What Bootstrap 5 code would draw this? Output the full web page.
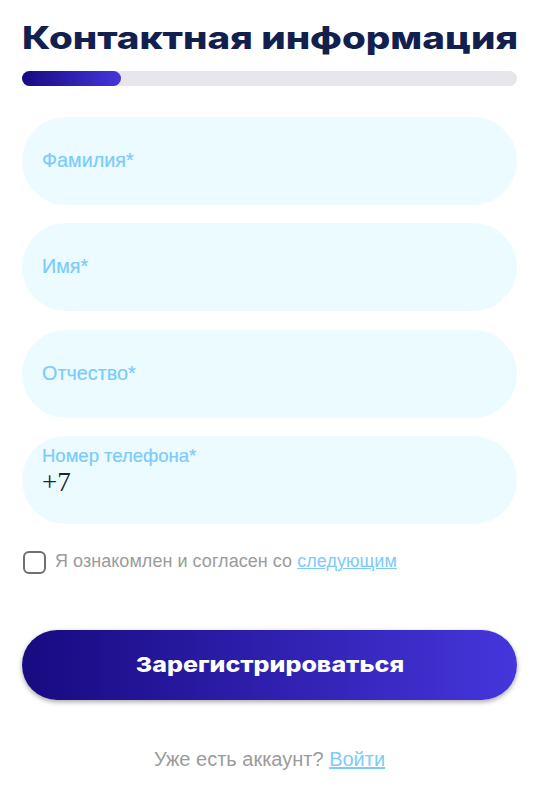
<!DOCTYPE html>
<html lang="ru">
<head>
<meta charset="utf-8">
<title>Контактная информация</title>
<link rel="stylesheet" href="https://cdn.jsdelivr.net/npm/bootstrap@5.3.0/dist/css/bootstrap.min.css">
<style>
body{background:#fff;font-family:"Liberation Sans",Arial,sans-serif;overflow:hidden}
.shell{padding:0 25px 0 22px;height:791px}
.head-title{font-family:Inter,sans-serif;font-weight:800;font-size:31px;line-height:36px;color:#12204f;margin:0;padding-top:20px;white-space:nowrap}
.head-title span{display:inline-block;transform:scaleX(1.242);transform-origin:left center}
.bar-track{height:15px;background:#e6e6ec;border-radius:8px;margin-top:15px}
.bar-fill{height:100%;background:linear-gradient(90deg,#180a80,#4536dc);border-radius:8px}
.fields{margin-top:31px;gap:18.3px}
.fld{position:relative;height:88px}
.fld .form-control{height:88px;border:0;border-radius:44px;background:#ebfbff;padding:32px 20px 0;font-family:"Liberation Serif",serif;font-size:27px;color:#1c2340;box-shadow:none;line-height:1}
.fld-label{position:absolute;left:20px;top:32px;margin:0;font-size:19.8px;line-height:23px;color:#7ccbfb;-webkit-text-stroke:.2px #7ccbfb}
.fld-label.up{top:8px;font-size:18.5px}
.fld .phone{padding:6px 20px 0}
.agree{margin-top:25px;gap:9px;font-size:18px;line-height:24px;color:#9b9b9b}
.agree label{letter-spacing:.04px}
.agree .form-check-input{width:23px;height:23px;margin:2px 0 0 1px;border:2px solid #6f6f6f;border-radius:6px;flex:none;float:none}
.agree a,.foot a{color:#7ccbfb}
.go-btn{margin-top:56px;height:70px;border:0;border-radius:35px;color:#fff;background:linear-gradient(90deg,#180a80,#4536dc);box-shadow:0 2px 5px rgba(0,0,0,.35);font-family:Inter,sans-serif;font-weight:800;font-size:20.5px}
.go-btn span{display:inline-block;transform:scaleX(1.22)}
.foot{margin-top:47px;font-size:20px;line-height:24px;color:#9b9b9b;text-align:center}
</style>
</head>
<body>
<main class="shell d-flex flex-column">
  <h1 class="head-title"><span>Контактная информация</span></h1>
  <div class="bar-track"><div class="bar-fill" style="width:20%"></div></div>
  <form class="d-flex flex-column">
    <div class="fields d-flex flex-column">
      <div class="fld"><input class="form-control" id="f1" type="text"><label class="fld-label" for="f1">Фамилия*</label></div>
      <div class="fld"><input class="form-control" id="f2" type="text"><label class="fld-label" for="f2">Имя*</label></div>
      <div class="fld"><input class="form-control" id="f3" type="text"><label class="fld-label" for="f3">Отчество*</label></div>
      <div class="fld"><input class="form-control phone" id="f4" type="text" value="+7"><label class="fld-label up" for="f4">Номер телефона*</label></div>
    </div>
    <div class="agree d-flex align-items-center">
      <input class="form-check-input" type="checkbox" id="ok">
      <label for="ok">Я ознакомлен и согласен со <a href="#">следующим</a></label>
    </div>
    <button type="button" class="btn go-btn w-100"><span>Зарегистрироваться</span></button>
  </form>
  <p class="foot mb-0">Уже есть аккаунт? <a href="#">Войти</a></p>
</main>
<script src="https://cdn.jsdelivr.net/npm/bootstrap@5.3.0/dist/js/bootstrap.bundle.min.js"></script>
</body>
</html>
